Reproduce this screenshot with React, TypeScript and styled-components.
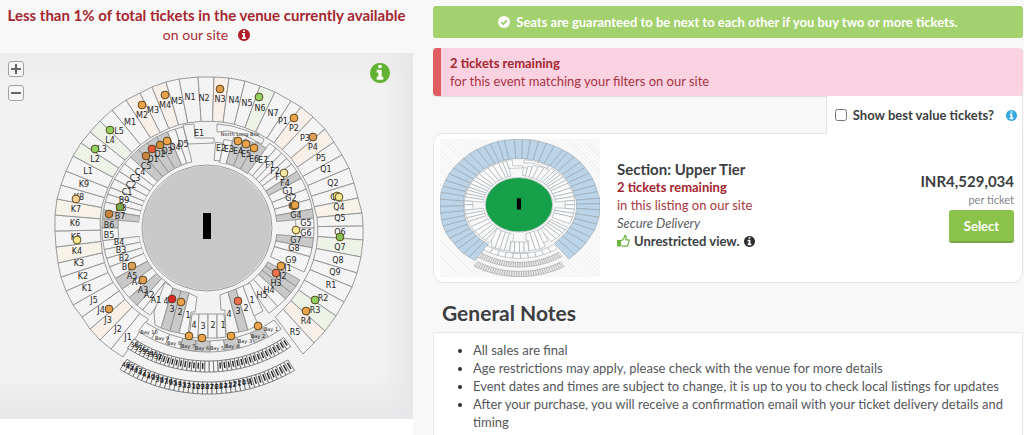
import React from "react";
import styled, { createGlobalStyle } from "styled-components";

const GlobalStyle = createGlobalStyle`
  *, *::before, *::after { box-sizing: border-box; }
  body {
    margin: 0;
    background: #f8f8f8;
    color: #3c3e41;
    font-family: Lato, "Open Sans", sans-serif;
    font-size: 13px;
    line-height: 18px;
  }
  h2, p, ul { margin: 0; padding: 0; }
`;

/* ---------- stadium geometry ---------- */

type Point = [number, number];
const CENTER: Point = [209, 228];

const FILL = {
  plain: "#f6f6f7",
  peach: "#faf1ea",
  cream: "#f9f5eb",
  green: "#f0f5e9",
  grey: "#cacaca",
};
type Tone = keyof typeof FILL;

const toPoints = (pts: Point[]) => pts.map((p) => p.map((n) => n.toFixed(1)).join(",")).join(" ");

const polar = (deg: number, rx: number, ry: number): Point => {
  const a = (deg * Math.PI) / 180;
  return [CENTER[0] - 1 + rx * Math.cos(a), CENTER[1] - ry * Math.sin(a)];
};

const towardsCenter = (p: Point, k: number): Point => [
  CENTER[0] + (p[0] - CENTER[0]) * k,
  CENTER[1] + (p[1] - CENTER[1]) * k,
];

const wedge = (from: number, to: number, inner: number, outer: number) =>
  toPoints([
    polar(from, outer, outer - 2),
    polar((from + to) / 2, outer, outer - 2),
    polar(to, outer, outer - 2),
    polar(to, inner, inner - 1),
    polar(from, inner, inner - 1),
  ]);

/* outer ends of the dividers of the upper tier, from block J1 clockwise to R5 */
const UPPER_EDGE: Point[] = [
  [123, 357], [111, 349], [100, 340], [90, 329], [82, 317], [73, 305], [66, 291], [61, 277],
  [58, 263], [56, 247], [55, 231], [55, 215], [57, 199], [61, 185], [66, 171], [73, 156],
  [81, 143], [90, 132], [100, 121], [112, 110], [126, 100], [140, 93], [152, 87], [166, 82],
  [179, 79], [198, 77], [214, 77], [229, 78], [245, 81], [260, 86], [275, 92], [291, 101],
  [301, 107], [313, 117], [325, 129], [334, 142], [342, 155], [349, 168], [354, 183], [358, 198],
  [362, 213], [363, 226], [363, 240], [361, 257], [357, 273], [352, 287], [344, 302], [336, 316],
  [325, 331], [314, 343], [303, 354],
];

const UPPER_TONE: Record<number, Tone> = {
  2: "peach", 8: "cream", 11: "cream", 15: "green", 17: "green", 20: "peach", 22: "peach",
  26: "peach", 29: "green", 32: "peach", 34: "peach", 39: "cream", 42: "green", 47: "green", 48: "peach",
};

/* [from, to, tone, inner radius, outer radius] in degrees, counter-clockwise from east */
type Wedge = [number, number, Tone, number?, number?];
const LOWER: Wedge[] = [
  [80, 85, "plain", 69, 88], [74.5, 80, "plain", 67, 92], [68, 74.5, "grey", 68, 96], [61.5, 68, "grey", 68, 98],
  [54.5, 61.5, "grey", 68, 100], [50, 54.5, "plain"], [46, 50, "plain"], [42, 46, "plain"], [38, 42, "plain"],
  [33, 38, "plain"], [28.5, 33, "grey"], [22, 28.5, "plain"], [16, 22, "plain"], [10.5, 16, "plain"],
  [5.5, 10.5, "grey"], [0, 5.5, "plain", 88], [-5.5, 0, "plain", 88], [-11, -5.5, "grey"], [-16, -11, "plain"],
  [-25, -16, "plain"], [-34, -30, "grey"], [-38.5, -34, "grey"], [-43, -38.5, "grey"], [-49, -43, "plain"],
  [-55, -49, "plain"],
  [103.5, 108, "plain"], [108, 112.5, "plain"], [112.5, 119, "grey"], [119, 125, "grey"], [125, 131, "grey"],
  [131, 137, "grey"], [137, 142, "plain"], [142, 147, "plain"], [147, 152, "plain"], [152, 157, "plain"],
  [157, 161, "plain"], [161, 165.5, "plain"], [165.5, 170, "plain"], [170, 175, "grey"], [175, 180, "grey", 90],
  [180, 187, "plain", 90], [187, 192, "plain"], [192, 197, "plain"], [197, 202, "plain"], [202, 209, "plain"],
  [209, 216, "grey"], [216, 222, "plain"], [222, 228, "grey"], [228, 232, "plain"], [232, 237, "plain"],
];

const LOWER_EXTRA: { tone: Tone; pts: Point[] }[] = [
  { tone: "plain", pts: [[154, 312], [165, 282], [173, 288], [161, 328], [155, 325]] },
  { tone: "grey", pts: [[161, 328], [173, 288], [181, 291], [170, 331]] },
  { tone: "grey", pts: [[170, 331], [181, 291], [189, 293], [179, 333]] },
  { tone: "plain", pts: [[179, 333], [189, 293], [197, 297], [195, 312], [191, 312], [188, 335]] },
  { tone: "plain", pts: [[192, 314], [199, 314], [198, 338], [189, 337]] },
  { tone: "plain", pts: [[199, 314], [208, 314], [208, 338], [198, 338]] },
  { tone: "plain", pts: [[208, 314], [217, 314], [217, 338], [208, 338]] },
  { tone: "plain", pts: [[217, 314], [224, 314], [226, 337], [217, 338]] },
  { tone: "plain", pts: [[220, 295], [228, 292], [239, 332], [226, 334], [225, 310], [221, 310]] },
  { tone: "grey", pts: [[228, 292], [236, 289], [248, 330], [239, 332]] },
  { tone: "plain", pts: [[236, 289], [243, 286], [258, 325], [248, 330]] },
  { tone: "plain", pts: [[243, 286], [250, 283], [263, 311], [254, 316]] },
  { tone: "plain", pts: [[183, 125], [194, 124], [195, 138], [214, 138], [214, 143], [188, 144]] },
  { tone: "plain", pts: [[217, 124], [232, 126], [248, 131], [264, 139], [262, 144], [244, 135], [228, 131], [217, 132]] },
];

const BAY_GREY = [3, 4, 6, 8];

const MAP_LABELS: [string, number, number][] = [
  ["N1", 190, 97], ["N2", 204, 98], ["N3", 220, 99], ["N4", 234, 100], ["N5", 247, 103], ["N6", 260, 108],
  ["N7", 273, 113], ["P1", 283, 121], ["P2", 294, 128], ["P3", 305, 138], ["P4", 313, 147], ["P5", 321, 158],
  ["Q1", 326, 169], ["Q2", 333, 183], ["Q3", 336, 197], ["Q4", 339, 207], ["Q5", 340, 218], ["Q6", 340, 232],
  ["Q7", 340, 247], ["Q8", 338, 260], ["Q9", 335, 272], ["R1", 331, 285], ["R2", 323, 298], ["R3", 315, 310],
  ["R4", 306, 321], ["R5", 295, 332], ["M5", 177, 101], ["M4", 165, 105], ["M3", 153, 110], ["M2", 142, 115],
  ["M1", 130, 122], ["L5", 119, 131], ["L4", 110, 140], ["L3", 102, 149], ["L2", 95, 159], ["L1", 88, 171],
  ["K9", 84, 184], ["K8", 79, 197], ["K7", 76, 209], ["K6", 75, 223], ["K5", 76, 237], ["K4", 77, 251],
  ["K3", 79, 263], ["K2", 83, 276], ["K1", 87, 288], ["J5", 94, 300], ["J4", 101, 310], ["J3", 108, 320],
  ["J2", 118, 329], ["J1", 128, 337], ["E1", 199, 133], ["E2", 221, 148], ["E3", 229, 149], ["E4", 238, 151],
  ["E5", 246, 154], ["E6", 254, 159], ["E7", 263, 160], ["F1", 270, 165], ["F2", 275, 171], ["F3", 280, 177],
  ["F4", 285, 183], ["G1", 288, 191], ["G2", 291, 198], ["G3", 294, 206], ["G4", 296, 215], ["G5", 306, 223],
  ["G6", 306, 233], ["G7", 296, 240], ["G8", 294, 248], ["G9", 291, 260], ["H1", 286, 268], ["H2", 281, 276],
  ["H3", 276, 283], ["H4", 269, 290], ["H5", 262, 295], ["D5", 183, 144], ["D4", 175, 147], ["D3", 167, 151],
  ["D2", 160, 154], ["D1", 153, 159], ["C5", 146, 166], ["C4", 140, 172], ["C3", 135, 178], ["C2", 131, 185],
  ["C1", 127, 192], ["B9", 124, 200], ["B8", 121, 208], ["B7", 120, 216], ["B6", 109, 225], ["B5", 109, 235],
  ["B4", 119, 242], ["B3", 121, 250], ["B2", 124, 258], ["B1", 127, 267], ["A5", 132, 276], ["A4", 137, 282],
  ["A3", 143, 290], ["A2", 149, 295], ["A1", 156, 300], ["4", 166, 301], ["3", 172, 309], ["2", 180, 312],
  ["1", 188, 315], ["4", 194, 325], ["3", 203, 326], ["2", 213, 325], ["1", 223, 325], ["4", 229, 314],
  ["3", 238, 311], ["2", 246, 308], ["1", 252, 300],
];

const BAY_LABELS: [string, number, number][] = [
  ["Bay 10", 149, 332], ["Bay 9", 162, 338], ["Bay 8", 174, 343], ["Bay 7", 188, 346], ["Bay 6", 202, 348],
  ["Bay 5", 217, 348], ["Bay 4", 232, 346], ["Bay 3", 245, 341], ["Bay 2", 258, 336], ["Bay 1", 271, 329],
];

const ORANGE = "#eba548";
const AMBER = "#cc8540";
const YELLOW = "#f9e78d";
const GREEN = "#93d060";
const CORAL = "#ee704c";
const MARKERS: [number, number, string][] = [
  [142, 105, ORANGE], [165, 95, "#e5a04a"], [110, 130, GREEN], [95, 149, GREEN], [76, 199, "#f6d191"],
  [146, 156, AMBER], [152, 149, "#ea5937"], [160, 145, "#d08f3c"], [167, 141, ORANGE], [120, 207, "#78ac48"],
  [109, 214, AMBER], [220, 89, "#e29c46"], [259, 97, GREEN], [294, 118, ORANGE], [313, 137, "#dd9e5b"],
  [238, 141, ORANGE], [246, 144, ORANGE], [254, 148, ORANGE], [284, 173, "#f8eaa8"], [337, 196, YELLOW],
  [339, 197, YELLOW], [294, 206, ORANGE], [295, 205, ORANGE], [296, 230, YELLOW], [77, 240, YELLOW],
  [132, 266, "#dda054"], [143, 280, "#e0a050"], [109, 309, "#e29d49"], [172, 299, "#dd2727"],
  [181, 302, ORANGE], [189, 336, ORANGE], [202, 338, ORANGE], [340, 237, "#84c24f"], [281, 266, ORANGE],
  [276, 273, CORAL], [315, 300, GREEN], [306, 311, ORANGE], [238, 301, CORAL], [258, 326, ORANGE],
  [231, 336, ORANGE],
];

const range = (n: number) => Array.from({ length: n }, (_, i) => i);
const ROW_COUNT = 38;
const rowAngle = (i: number, from: number, to: number) => from + ((to - from) * i) / ROW_COUNT;

function Stadium({ upper, pitch, plain }: { upper?: string; pitch: string; plain?: boolean }) {
  const tone = (t: Tone = "plain") => (plain ? "#fbfbfb" : FILL[t]);
  const line = plain ? "#8b949b" : "#919191";
  return (
    <g stroke={line} strokeWidth={plain ? 1 : 0.9} strokeLinejoin="round">
      {UPPER_EDGE.slice(0, -1).map((p, i) => {
        const q = UPPER_EDGE[i + 1];
        return (
          <polygon
            key={i}
            points={toPoints([p, q, towardsCenter(q, 0.706), towardsCenter(p, 0.706)])}
            fill={upper ?? tone(UPPER_TONE[i])}
          />
        );
      })}
      {LOWER.map(([a, b, t, inner = 69, outer = 106], i) => (
        <polygon key={i} points={wedge(a, b, inner, outer)} fill={tone(t)} />
      ))}
      {LOWER_EXTRA.map((s, i) => (
        <polygon key={i} points={toPoints(s.pts)} fill={tone(s.tone)} />
      ))}
      {range(10).map((i) => (
        <polygon
          key={i}
          points={wedge(236.5 + i * 6.9, 243.4 + i * 6.9, 114, 126)}
          fill={tone(BAY_GREY.includes(i) ? "grey" : "plain")}
        />
      ))}
      <g fill={plain ? "#ececec" : "#f6f6f7"} stroke={plain ? "#8f8f8f" : "#6f6f6f"}>
        {range(ROW_COUNT).map((i) => (
          <React.Fragment key={i}>
            <polygon points={wedge(rowAngle(i, 236.5, 304.5), rowAngle(i + 1, 236.5, 304.5), 134, 146)} />
            <polygon points={wedge(rowAngle(i, 238.5, 301), rowAngle(i + 1, 238.5, 301), 155, 168)} />
          </React.Fragment>
        ))}
      </g>
      <ellipse cx="207" cy="228" rx="66" ry="64" fill={pitch} stroke="#f6f6f6" strokeWidth="4" />
      <ellipse cx="207" cy="228" rx="65" ry="63" fill="none" />
      <rect x="203" y="213" width="8" height="26" fill="#000" stroke="none" />
    </g>
  );
}

function SeatMap() {
  return (
    <MapSvg viewBox="0 53 413 366" role="img" aria-label="Seating plan">
      <defs>
        <pattern id="hatch" width="4" height="4" patternUnits="userSpaceOnUse">
          <path d="M-1 1L1 -1M0 4L4 0M3 5L5 3" stroke="#000" strokeOpacity=".045" strokeWidth=".8" />
        </pattern>
        <linearGradient id="fade" x1="0" y1="0" x2="0" y2="1">
          <stop offset="0" stopColor="#eeeeef" />
          <stop offset=".1" stopColor="#f4f4f4" />
          <stop offset=".88" stopColor="#f4f4f4" />
          <stop offset="1" stopColor="#e9e9eb" />
        </linearGradient>
        <linearGradient id="side" x1="0" y1="0" x2="1" y2="0">
          <stop offset=".92" stopColor="#e9e9eb" stopOpacity="0" />
          <stop offset="1" stopColor="#e9e9eb" />
        </linearGradient>
      </defs>
      <rect y="53" width="413" height="366" fill="url(#fade)" />
      <rect y="53" width="413" height="366" fill="url(#side)" />
      <Stadium pitch="#cacaca" />
      <rect y="53" width="413" height="366" fill="url(#hatch)" />
      <g fontFamily='"DejaVu Sans", sans-serif' textAnchor="middle" fill="#262626">
        <g fontSize="8">
          {MAP_LABELS.map(([t, x, y]) => (
            <text key={t + x + y} x={x} y={y + 3}>{t}</text>
          ))}
        </g>
        <g fontSize="5">
          {BAY_LABELS.map(([t, x, y]) => (
            <text key={t} x={x} y={y + 2}>{t}</text>
          ))}
          <text x="240" y="136">North Long Box</text>
        </g>
        <g fontSize="7" fill="#111">
          {range(7).map((i) => {
            const [x, y] = polar(rowAngle(i + 1, 236.5, 304.5), 140, 138);
            return <text key={i} x={x} y={y + 2}>{38 - i}</text>;
          })}
          {range(28).map((i) => {
            const [x, y] = polar(rowAngle(i + 0.5, 238.5, 301), 161, 159);
            return <text key={i} x={x} y={y + 2}>{46 - i}</text>;
          })}
        </g>
      </g>
      {/* seat-row numerals that are too small to read at this zoom level */}
      <g stroke="#222" strokeWidth="1.4">
        {range(ROW_COUNT).slice(7).filter((i) => i < 18 || i > 20).map((i) => {
          const a = rowAngle(i + 0.5, 236.5, 304.5);
          const [x1, y1] = polar(a, 137, 135);
          const [x2, y2] = polar(a, 143, 141);
          return <line key={i} x1={x1} y1={y1} x2={x2} y2={y2} />;
        })}
        {range(ROW_COUNT).slice(28).map((i) => {
          const a = rowAngle(i + 0.5, 238.5, 301);
          const [x1, y1] = polar(a, 158, 156);
          const [x2, y2] = polar(a, 165, 163);
          return <line key={i} x1={x1} y1={y1} x2={x2} y2={y2} />;
        })}
      </g>
      <g stroke="#4c3b1c" strokeWidth=".9">
        {MARKERS.map(([x, y, c]) => (
          <circle key={`${x}-${y}`} cx={x} cy={y} r="3.9" fill={c} />
        ))}
      </g>
    </MapSvg>
  );
}

/* ---------- icons ---------- */

function InfoIcon({ size, color }: { size: number; color: string }) {
  return (
    <Glyph width={size} height={size} viewBox="0 128 1536 1536" aria-hidden="true">
      <path
        fill={color}
        d="M1024 1376v-160q0-14-9-23t-23-9h-96v-512q0-14-9-23t-23-9h-320q-14 0-23 9t-9 23v160q0 14 9 23t23 9h96v320h-96q-14 0-23 9t-9 23v160q0 14 9 23t23 9h448q14 0 23-9t9-23zm-128-896v-160q0-14-9-23t-23-9h-192q-14 0-23 9t-9 23v160q0 14 9 23t23 9h192q14 0 23-9t9-23zm640 416q0 209-103 385.500t-279.500 279.500-385.500 103-385.500-103-279.500-279.500-103-385.500 103-385.500 279.500-279.500 385.500-103 385.500 103 279.500 279.500 103 385.500z"
      />
    </Glyph>
  );
}

function CheckIcon() {
  return (
    <Glyph width="12" height="12" viewBox="0 0 12 12" aria-hidden="true">
      <circle cx="6" cy="6" r="6" fill="#fff" />
      <path d="M3.200 6.100L5.300 8.100L8.900 4.300" fill="none" stroke="#93c95e" strokeWidth="1.700" />
    </Glyph>
  );
}

function ThumbIcon() {
  return (
    <Glyph width="13" height="12" viewBox="0 0 13 12" aria-hidden="true">
      <rect x="0" y="5" width="3.400" height="6.500" fill="#6cb33f" />
      <path
        d="M3.500 5.400H5L7.200 2.800L7.500 .7H8.600L9.300 1.900L8.700 4.800H12V6.200L11.500 8L11 9.900L10.300 11.200H6.200L3.500 10.500Z"
        fill="#fff"
        stroke="#6cb33f"
        strokeWidth="1.200"
        strokeLinejoin="round"
      />
    </Glyph>
  );
}

/* ---------- layout ---------- */

const Glyph = styled.svg`
  display: block;
  flex: none;
`;

const Page = styled.main`
  display: grid;
  grid-template-columns: 7fr 10fr;
  column-gap: 20px;
  padding-right: 1px;
  min-height: 100vh;
`;

const MapColumn = styled.section`
  display: flex;
  flex-direction: column;
  min-width: 0;
  background: #fff;
`;

const Availability = styled.header`
  padding: 5px 0 8px;
  background: #f8f8f8;
  color: #aa2b33;
  font-size: 14px;
  line-height: 20px;
  text-align: center;
`;

const SecondLine = styled.p`
  display: flex;
  justify-content: center;
  align-items: center;
  gap: 10px;
`;

const MapFrame = styled.div`
  position: relative;
`;

const MapSvg = styled.svg`
  display: block;
  width: 100%;
  height: auto;
`;

const ZoomControls = styled.div`
  position: absolute;
  top: 8px;
  left: 8px;
  display: grid;
  gap: 8px;
`;

const IconButton = styled.button`
  display: flex;
  align-items: center;
  justify-content: center;
  padding: 0;
  border: 0;
  background: none;
  cursor: pointer;
`;

const ZoomButton = styled(IconButton)`
  width: 16px;
  height: 16px;
  border: 1px solid #a2a2a2;
  border-radius: 3px;
  background: #f6f6f6;
`;

const LegendButton = styled(IconButton)`
  position: absolute;
  top: 10px;
  right: 23px;
  border-radius: 50%;
  background: #fff;
`;

const ListingColumn = styled.section`
  display: flex;
  flex-direction: column;
  min-width: 0;
  padding-top: 6px;
`;

const Guarantee = styled.p`
  display: flex;
  align-items: center;
  justify-content: center;
  gap: 6px;
  height: 32px;
  border-radius: 3px;
  background: #a3d16e;
  color: #fff;
  font-weight: 700;
`;

const Remaining = styled.div`
  margin-top: 10px;
  padding: 6px 9px;
  border-left: 8px solid #e05d61;
  border-radius: 4px;
  background: #fad2e2;
  box-shadow: 0 1px 1px #ddd;
  color: #a93245;
`;

const Strong = styled.strong<{ $size?: number }>`
  display: block;
  color: #a5262f;
  font-size: ${(p) => p.$size ?? 13}px;
  font-weight: 700;
`;

const BestValue = styled.label`
  display: flex;
  align-items: center;
  align-self: flex-end;
  position: relative;
  height: 38px;
  padding: 0 5px 0 8px;
  border-left: 1px solid #e4e4e4;
  border-right: 1px solid #e8e8e8;
  background: #fff;
  font-weight: 700;
  margin-bottom: -1px;
`;

const Tick = styled.input`
  width: 12px;
  height: 12px;
  margin: 0 6px 0 0;
`;

const TickInfo = styled.span`
  margin-left: 12px;
`;

const Listing = styled.article`
  display: flex;
  gap: 17px;
  padding: 5px 8px 5px 6px;
  border: 1px solid #e6e6e6;
  border-radius: 10px 0 10px 10px;
  background: #fff;
`;

const Thumbnail = styled.svg`
  flex: none;
  width: 160px;
  height: 138px;
  background: repeating-linear-gradient(45deg, #fafafa 0 2px, #f2f2f2 2px 3px);
`;

const Details = styled.div`
  flex: 1;
  padding-top: 22px;
  color: #a93a40;
`;

const SectionName = styled.h3`
  margin: 0;
  color: #3c3e41;
  font-size: 15px;
  line-height: 17px;
`;

const Delivery = styled.p`
  color: #5a5c5f;
  font-style: italic;
`;

const View = styled.p`
  display: flex;
  align-items: center;
  gap: 4px;
  color: #3c3e41;
  font-weight: 700;
`;

const Price = styled.div`
  display: flex;
  flex-direction: column;
  align-items: flex-end;
  padding-top: 32px;
`;

const Amount = styled.strong`
  font-size: 15px;
  line-height: 20px;
`;

const Unit = styled.span`
  color: #85878a;
  font-size: 11px;
`;

const SelectButton = styled.button`
  width: 65px;
  height: 33px;
  margin-top: 1px;
  border: 0;
  border-bottom: 2px solid #75a83f;
  border-radius: 3px;
  background: #8bc34a;
  color: #fff;
  font: 700 13px/18px Lato, sans-serif;
  cursor: pointer;
`;

const Heading = styled.h2`
  padding: 17px 9px 6px;
  font-size: 21px;
  line-height: 26px;
`;

const Notes = styled.ul`
  flex: 1;
  padding: 8px 16px 3px 39px;
  border: 1px solid #e8e8e8;
  border-bottom: 0;
  background: #fff;
  color: #55575b;
  li::marker { color: #2f3133; }
`;

const NOTES = [
  "All sales are final",
  "Age restrictions may apply, please check with the venue for more details",
  "Event dates and times are subject to change, it is up to you to check local listings for updates",
  "After your purchase, you will receive a confirmation email with your ticket delivery details and timing",
];

export default function App() {
  return (
    <>
      <GlobalStyle />
      <Page>
        <MapColumn>
          <Availability>
            <Strong $size={15}>Less than 1% of total tickets in the venue currently available</Strong>
            <SecondLine>
              on our site <InfoIcon size={12} color="#b01f27" />
            </SecondLine>
          </Availability>
          <MapFrame>
            <SeatMap />
            <ZoomControls>
              <ZoomButton type="button" aria-label="Zoom in">
                <Glyph width="10" height="10" viewBox="0 0 10 10">
                  <path d="M0 5H10M5 0V10" stroke="#666" strokeWidth="2" />
                </Glyph>
              </ZoomButton>
              <ZoomButton type="button" aria-label="Zoom out">
                <Glyph width="10" height="10" viewBox="0 0 10 10">
                  <path d="M0 5H10" stroke="#666" strokeWidth="2" />
                </Glyph>
              </ZoomButton>
            </ZoomControls>
            <LegendButton type="button" aria-label="Map information">
              <InfoIcon size={20} color="#62b233" />
            </LegendButton>
          </MapFrame>
        </MapColumn>

        <ListingColumn>
          <Guarantee>
            <CheckIcon />
            Seats are guaranteed to be next to each other if you buy two or more tickets.
          </Guarantee>
          <Remaining>
            <Strong>2 tickets remaining</Strong>
            for this event matching your filters on our site
          </Remaining>
          <BestValue>
            <Tick type="checkbox" />
            Show best value tickets?
            <TickInfo>
              <InfoIcon size={11} color="#36a9e1" />
            </TickInfo>
          </BestValue>
          <Listing>
            <Thumbnail viewBox="55 76 308 319" preserveAspectRatio="none" role="img" aria-label="Upper Tier on the seating plan">
              <Stadium plain upper="#bcd4e8" pitch="#17a04a" />
            </Thumbnail>
            <Details>
              <SectionName>Section: Upper Tier</SectionName>
              <Strong>2 tickets remaining</Strong>
              in this listing on our site
              <Delivery>Secure Delivery</Delivery>
              <View>
                <ThumbIcon /> Unrestricted view. <InfoIcon size={11} color="#2c2e31" />
              </View>
            </Details>
            <Price>
              <Amount>INR4,529,034</Amount>
              <Unit>per ticket</Unit>
              <SelectButton type="button">Select</SelectButton>
            </Price>
          </Listing>
          <Heading>General Notes</Heading>
          <Notes>
            {NOTES.map((n) => (
              <li key={n}>{n}</li>
            ))}
          </Notes>
        </ListingColumn>
      </Page>
    </>
  );
}
